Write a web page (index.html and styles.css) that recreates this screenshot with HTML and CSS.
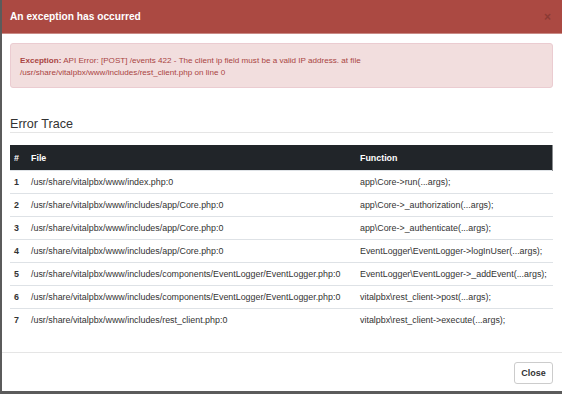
FILE: index.html
```html
<!DOCTYPE html>
<html lang="en">
<head>
    <meta charset="UTF-8">
    <meta name="viewport" content="width=device-width, initial-scale=1.0">
    <title>An exception has occurred</title>
    <link rel="stylesheet" href="styles.css">
</head>
<body>
    <div class="modal">
        <div class="modal-header">
            <h4 class="modal-title">An exception has occurred</h4>
            <span class="close">&times;</span>
        </div>

        <div class="modal-body">
            <div class="alert">
                <b>Exception:</b> API Error: [POST] /events 422 - The client ip field must be a valid IP address. at file<br>
                /usr/share/vitalpbx/www/includes/rest_client.php on line 0
            </div>

            <h3 class="trace-title">Error Trace</h3>

            <table class="trace">
                <colgroup>
                    <col class="col-num">
                    <col class="col-file">
                    <col class="col-func">
                </colgroup>
                <thead>
                    <tr>
                        <th>#</th>
                        <th>File</th>
                        <th>Function</th>
                    </tr>
                </thead>
                <tbody>
                    <tr>
                        <td class="num">1</td>
                        <td>/usr/share/vitalpbx/www/index.php:0</td>
                        <td>app\Core-&gt;run(...args);</td>
                    </tr>
                    <tr>
                        <td class="num">2</td>
                        <td>/usr/share/vitalpbx/www/includes/app/Core.php:0</td>
                        <td>app\Core-&gt;_authorization(...args);</td>
                    </tr>
                    <tr>
                        <td class="num">3</td>
                        <td>/usr/share/vitalpbx/www/includes/app/Core.php:0</td>
                        <td>app\Core-&gt;_authenticate(...args);</td>
                    </tr>
                    <tr>
                        <td class="num">4</td>
                        <td>/usr/share/vitalpbx/www/includes/app/Core.php:0</td>
                        <td>EventLogger\EventLogger-&gt;logInUser(...args);</td>
                    </tr>
                    <tr>
                        <td class="num">5</td>
                        <td>/usr/share/vitalpbx/www/includes/components/EventLogger/EventLogger.php:0</td>
                        <td>EventLogger\EventLogger-&gt;_addEvent(...args);</td>
                    </tr>
                    <tr>
                        <td class="num">6</td>
                        <td>/usr/share/vitalpbx/www/includes/components/EventLogger/EventLogger.php:0</td>
                        <td>vitalpbx\rest_client-&gt;post(...args);</td>
                    </tr>
                    <tr>
                        <td class="num">7</td>
                        <td>/usr/share/vitalpbx/www/includes/rest_client.php:0</td>
                        <td>vitalpbx\rest_client-&gt;execute(...args);</td>
                    </tr>
                </tbody>
            </table>
        </div>

        <div class="modal-footer">
            <button class="btn">Close</button>
        </div>
    </div>
</body>
</html>
```

FILE: styles.css
```css
body {
    margin: 0;
    font-family: "Liberation Sans", Arial, sans-serif;
    color: #333;
    background: #fff;
}
.modal {
    width: 560px;
    height: 391px;
    border-left: 2px solid #5b5b5b;
    border-bottom: 3px solid #5b5b5b;
    display: flex;
    flex-direction: column;
    background: #fff;
}
.modal-header {
    height: 33px;
    background-color: #ab4942;
    border-bottom: 1px solid #c98a85;
    padding: 0 10px 0 8px;
    display: flex;
    align-items: center;
    justify-content: space-between;
}
.modal-title {
    margin: 0;
    color: #fff;
    font-size: 10.2px;
    font-weight: bold;
}
.close {
    color: #8b3a34;
    font-size: 12px;
    font-weight: bold;
    margin-right: 1px;
}
.modal-body {
    padding: 9px 9px 0 8px;
}
.alert {
    padding: 11px 9px 8px;
    border: 1px solid #ebccd1;
    border-radius: 3px;
    background-color: #f2dede;
    color: #a94442;
    font-size: 8.1px;
    line-height: 12px;
}
.trace-title {
    margin: 28px 0 0;
    font-size: 12.6px;
    font-weight: normal;
    line-height: 16px;
    color: #333;
    border-bottom: 1px solid #e5e5e5;
}
.trace {
    width: 100%;
    margin-top: 12px;
    border-collapse: collapse;
    table-layout: fixed;
    font-size: 8.9px;
}
.col-num {
    width: 17px;
}
.col-file {
    width: 329px;
}
.trace th,
.trace td {
    padding: 0 0 0 4px;
    text-align: left;
    white-space: nowrap;
}
.trace th {
    height: 25px;
    background-color: #212529;
    color: #fff;
    font-weight: bold;
    border-right: 1px solid #8a8d90;
}
.trace th:first-child,
.trace th:nth-child(2) {
    border-right: none;
}
.trace td {
    height: 22px;
    border-top: 1px solid #dee2e6;
    color: #333;
}
.trace td.num {
    font-weight: bold;
}
.modal-footer {
    margin-top: auto;
    border-top: 1px solid #e5e5e5;
    padding: 9px 9px 7px;
    display: flex;
    justify-content: flex-end;
}
.btn {
    width: 39px;
    height: 22px;
    padding: 0;
    border: 1px solid #ccc;
    border-radius: 3px;
    background: #fff;
    color: #333;
    font-family: "Liberation Sans", Arial, sans-serif;
    font-size: 9px;
    font-weight: bold;
}
```
